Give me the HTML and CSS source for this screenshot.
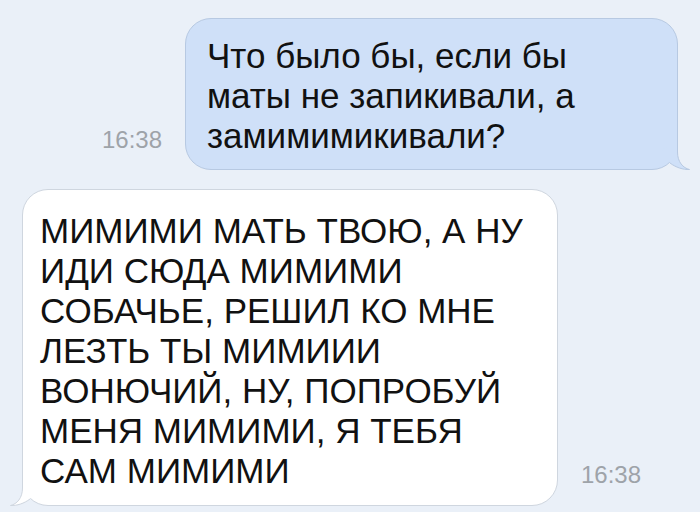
FILE: index.html
```html
<!DOCTYPE html>
<html lang="ru">
<head>
    <meta charset="UTF-8">
    <meta name="viewport" content="width=device-width, initial-scale=1.0">
    <title>Сообщения</title>
    <link rel="stylesheet" href="styles.css">
</head>
<body>
    <div class="chat">
        <div class="row row-out">
            <span class="time">16:38</span>
            <div class="bubble bubble-out">
                Что было бы, если бы<br>
                маты не запикивали, а<br>
                замимимикивали?
                <svg class="tail" width="28" height="30" viewBox="0 0 28 30">
                    <path class="tail-fill" d="M15.5 0 L15.5 12 C15.5 22 21 28 27.5 29.5 C21 29.8 14 27.5 8 23 L0 10 Z"/>
                    <path class="tail-line" d="M15.5 0 L15.5 12 C15.5 22 21 28 27.5 29.5 C21 29.8 14 27.5 8 23"/>
                </svg>
            </div>
        </div>
        <div class="row row-in">
            <div class="bubble bubble-in">
                МИМИМИ МАТЬ ТВОЮ, А НУ<br>
                ИДИ СЮДА МИМИМИ<br>
                СОБАЧЬЕ, РЕШИЛ КО МНЕ<br>
                ЛЕЗТЬ ТЫ МИМИИИ<br>
                ВОНЮЧИЙ, НУ, ПОПРОБУЙ<br>
                МЕНЯ МИМИМИ, Я ТЕБЯ<br>
                САМ МИМИМИ
                <svg class="tail" width="28" height="30" viewBox="0 0 28 30">
                    <path class="tail-fill" d="M15.5 0 L15.5 12 C15.5 22 21 28 27.5 29.5 C21 29.8 14 27.5 8 23 L0 10 Z"/>
                    <path class="tail-line" d="M15.5 0 L15.5 12 C15.5 22 21 28 27.5 29.5 C21 29.8 14 27.5 8 23"/>
                </svg>
            </div>
            <span class="time">16:38</span>
        </div>
    </div>
</body>
</html>
```
FILE: styles.css
```css
* {
    box-sizing: border-box;
    margin: 0;
    padding: 0;
}
body {
    font-family: "Liberation Sans", Arial, sans-serif;
    background-color: #eaf0f8;
    width: 700px;
    height: 512px;
    overflow: hidden;
}
.chat {
    padding-top: 18px;
}
.row {
    display: flex;
    align-items: last baseline;
    gap: 23px;
}
.row-out {
    justify-content: flex-end;
    padding-right: 22px;
}
.row-in {
    margin-top: 19px;
    padding-left: 22px;
}
.time {
    font-size: 24px;
    color: #9ea3a9;
}
.bubble {
    position: relative;
    font-size: 35px;
    line-height: 40px;
    color: #111;
    white-space: nowrap;
    border: 1px solid;
    border-radius: 26px;
}
.bubble-out {
    width: 493px;
    padding: 17px 20px 13px 21px;
    background-color: #cfe0f8;
    border-color: #b7c9e2;
}
.bubble-in {
    width: 536px;
    padding: 21px 16px 14px 17px;
    background-color: #fff;
    border-color: #cfd6df;
}
.tail {
    position: absolute;
    bottom: -1px;
    right: -13px;
}
.bubble-in .tail {
    right: auto;
    left: -13px;
    transform: scaleX(-1);
}
.bubble-out .tail-fill {
    fill: #cfe0f8;
}
.bubble-out .tail-line {
    fill: none;
    stroke: #b7c9e2;
}
.bubble-in .tail-fill {
    fill: #fff;
}
.bubble-in .tail-line {
    fill: none;
    stroke: #cfd6df;
}
```
